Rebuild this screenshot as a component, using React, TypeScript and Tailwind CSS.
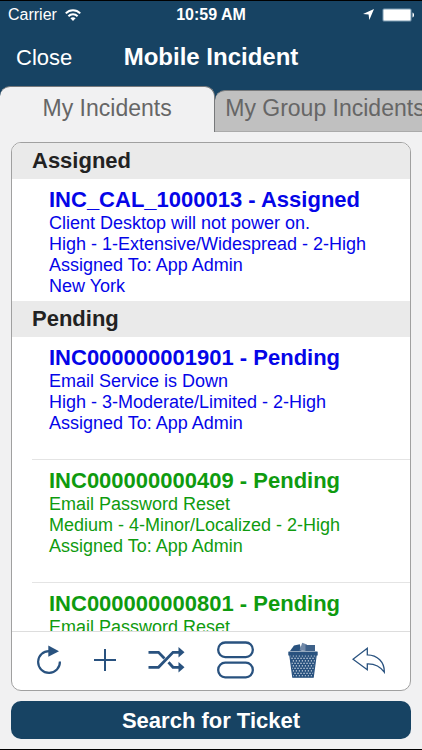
import { useState } from 'react';

interface Incident {
  id: string;
  status: string;
  summary: string;
  priority: string;
  assignee: string;
  site?: string;
  color: string;
}

const sections: { title: string; incidents: Incident[] }[] = [
  {
    title: 'Assigned',
    incidents: [
      {
        id: 'INC_CAL_1000013',
        status: 'Assigned',
        summary: 'Client Desktop will not power on.',
        priority: 'High - 1-Extensive/Widespread - 2-High',
        assignee: 'App Admin',
        site: 'New York',
        color: 'text-[#0505e8]',
      },
    ],
  },
  {
    title: 'Pending',
    incidents: [
      {
        id: 'INC000000001901',
        status: 'Pending',
        summary: 'Email Service is Down',
        priority: 'High - 3-Moderate/Limited - 2-High',
        assignee: 'App Admin',
        color: 'text-[#0505e8]',
      },
      {
        id: 'INC000000000409',
        status: 'Pending',
        summary: 'Email Password Reset',
        priority: 'Medium - 4-Minor/Localized - 2-High',
        assignee: 'App Admin',
        color: 'text-[#0f9b0f]',
      },
      {
        id: 'INC000000000801',
        status: 'Pending',
        summary: 'Email Password Reset',
        priority: 'Medium - 4-Minor/Localized - 2-High',
        assignee: 'App Admin',
        color: 'text-[#0f9b0f]',
      },
    ],
  },
];

function StatusBar() {
  return (
    <div className="grid grid-cols-3 items-center h-7 px-2 border-t border-black text-base">
      <div className="flex items-center gap-2">
        <span>Carrier</span>
        <svg width="16" height="12" viewBox="0 0 16 12" fill="none" stroke="white" strokeWidth="2">
          <path d="M0.8 4.4C4.8 0.2 11.2 0.2 15.2 4.4" />
          <path d="M3.4 7.2C6 4.6 10 4.6 12.6 7.2" />
          <path d="M8 12L5.4 9.2C6.8 7.9 9.2 7.9 10.6 9.2Z" fill="white" stroke="none" />
        </svg>
      </div>
      <span className="text-center font-bold whitespace-nowrap">10:59 AM</span>
      <div className="flex items-center justify-end gap-2">
        <svg width="11" height="11" viewBox="0 0 11 11" fill="white">
          <path d="M11 0L6.3 11L5.6 5.4L0 4.9Z" />
        </svg>
        <svg width="32" height="14" viewBox="0 0 32 14" fill="white">
          <rect x="0.5" y="0.5" width="29" height="13" rx="1.5" fill="#7d9db3" />
          <rect x="1.5" y="1.5" width="27" height="11" rx="1" />
          <path d="M30.5 4.5C32.6 5.2 32.6 8.8 30.5 9.5Z" />
        </svg>
      </div>
    </div>
  );
}

function RefreshIcon() {
  return (
    <svg width="26" height="30" viewBox="0 0 26 30" fill="none">
      <path d="M23.9 16.5A10.9 10.9 0 1 1 13.5 6.1" stroke="#29527f" strokeWidth="2.2" />
      <path d="M12.3 0.5L23 6.2L12.3 11.8Z" fill="#29527f" />
    </svg>
  );
}

function PlusIcon() {
  return (
    <svg width="24" height="24" viewBox="0 0 24 24" stroke="#29527f" strokeWidth="2">
      <path d="M12 1V23M1 12H23" />
    </svg>
  );
}

function ShuffleIcon() {
  return (
    <svg width="37" height="26" viewBox="0 0 37 26" fill="none" stroke="#29527f" strokeWidth="2.8">
      <path d="M0.5 5.3H10.5L16.5 11.4" />
      <path d="M20.5 15.2L25 20.3H31" />
      <path d="M0.5 20.3H10.5L25 5.3H31" />
      <path d="M30.5 0L36.5 5.3L30.5 10.6Z" fill="#29527f" stroke="none" />
      <path d="M30.5 15L36.5 20.3L30.5 25.6Z" fill="#29527f" stroke="none" />
    </svg>
  );
}

function StackIcon() {
  return (
    <svg width="37" height="38" viewBox="0 0 37 38" fill="none" stroke="#29527f" strokeWidth="2.3">
      <rect x="1.2" y="1.5" width="34.6" height="14.6" rx="7" />
      <rect x="1.2" y="21.7" width="34.6" height="14.6" rx="7" />
    </svg>
  );
}

function TrashIcon() {
  return (
    <svg width="36" height="36" viewBox="-3 0 36 36">
      <defs>
        <pattern id="mesh" width="3" height="5" patternUnits="userSpaceOnUse">
          <rect width="3" height="5" fill="#29527f" />
          <rect x="0.4" y="0.7" width="1.3" height="1.3" fill="#c6d2df" />
          <rect x="1.8" y="3.2" width="1.2" height="1.3" fill="#c6d2df" />
        </pattern>
      </defs>
      <path d="M2 9L6 3.4L11.8 2.2L13.5 9Z" fill="#29527f" />
      <path d="M11.5 8.5L14.2 0.8L19 2.4L18 9Z" fill="#7189a8" />
      <path d="M17.5 3H27V9H17.5Z" fill="#3e6189" />
      <path d="M2 13H28L25.2 35.2H4.8Z" fill="url(#mesh)" />
      <path d="M1.8 13L4.8 35.2H25.2L28.2 13" fill="none" stroke="#29527f" strokeWidth="1.2" />
      <rect x="0.3" y="9.5" width="29.4" height="4" rx="0.6" fill="#29527f" />
    </svg>
  );
}

function ReplyIcon() {
  return (
    <svg width="34" height="27" viewBox="0 0 34 27" fill="none" stroke="#29527f" strokeWidth="1.3">
      <path d="M1 12.2L15.3 1.3V7.8C25.5 8 32.6 15 32.3 25.2C28.6 19.7 23.2 16.6 15.3 16.8V22.8Z" />
    </svg>
  );
}

const actions = [
  { label: 'Refresh', icon: <RefreshIcon /> },
  { label: 'New incident', icon: <PlusIcon /> },
  { label: 'Reassign', icon: <ShuffleIcon /> },
  { label: 'Change view', icon: <StackIcon /> },
  { label: 'Delete', icon: <TrashIcon /> },
  { label: 'Reply', icon: <ReplyIcon /> },
];

function IncidentRow({ incident }: { incident: Incident }) {
  return (
    <li className="ml-5 border-b border-[#e4e4e4] last:border-b-0">
      <div className={`pl-[17px] pt-[7px] pb-1 text-lg leading-[21px] whitespace-nowrap ${incident.color}`}>
        <h3 className="text-[22px] leading-[27px] font-bold">
          {incident.id} - {incident.status}
        </h3>
        <p>{incident.summary}</p>
        <p>{incident.priority}</p>
        <p>Assigned To: {incident.assignee}</p>
        <p className="h-[21px]">{incident.site}</p>
      </div>
    </li>
  );
}

export default function App() {
  const [tab, setTab] = useState('mine');

  return (
    <div className="flex flex-col h-screen overflow-hidden bg-[#f1f1f2] border-b border-black font-['Liberation_Sans',Arial,sans-serif]">
      <header className="shrink-0 bg-[#174363] text-white">
        <StatusBar />
        <div className="grid grid-cols-[1fr_auto_1fr] items-center h-[58px] px-4">
          <button className="justify-self-start text-[22px]">Close</button>
          <h1 className="text-2xl font-bold whitespace-nowrap">Mobile Incident</h1>
        </div>

        {/* Tabs */}
        <div role="tablist" className="flex items-end text-[23px] text-[#666666]">
          <button
            role="tab"
            aria-selected={tab === 'mine'}
            onClick={() => setTab('mine')}
            className="w-[51%] h-[46px] pb-0.5 rounded-t-[10px] border-t border-r border-[#77797b] bg-[#f1f1f2]"
          >
            My Incidents
          </button>
          <button
            role="tab"
            aria-selected={tab === 'group'}
            onClick={() => setTab('group')}
            className="flex-1 min-w-0 h-[42px] pl-[10px] pb-1.5 rounded-tl-[10px] border-t border-b border-[#77797b] border-b-[#aaaaaa] bg-[#c0c0c0] text-left whitespace-nowrap overflow-hidden"
          >
            My Group Incidents
          </button>
        </div>
      </header>

      <main className="flex flex-col flex-1 min-h-0 gap-[10px] px-[11px] pt-[10px] pb-[10px]">
        <div className="flex flex-col flex-1 min-h-0 overflow-hidden rounded-[10px] border border-[#a0a0a0] bg-white">
          <div className="flex-1 min-h-0 overflow-y-auto [scrollbar-width:none]">
            {sections.map((section) => (
              <section key={section.title}>
                <h2 className="h-9 pl-5 bg-[#eaeaea] text-[22px] leading-9 font-bold text-[#222222]">
                  {section.title}
                </h2>
                <ul>
                  {section.incidents.map((incident) => (
                    <IncidentRow key={incident.id} incident={incident} />
                  ))}
                </ul>
              </section>
            ))}
          </div>

          {/* Toolbar */}
          <div className="flex shrink-0 items-center justify-between h-[59px] pb-0.5 px-6 border-t border-[#dddddd]">
            {actions.map((action) => (
              <button key={action.label} aria-label={action.label}>
                {action.icon}
              </button>
            ))}
          </div>
        </div>

        <button className="shrink-0 h-[38px] rounded-[10px] bg-[#174363] text-[22px] font-bold text-white">
          Search for Ticket
        </button>
      </main>
    </div>
  );
}
